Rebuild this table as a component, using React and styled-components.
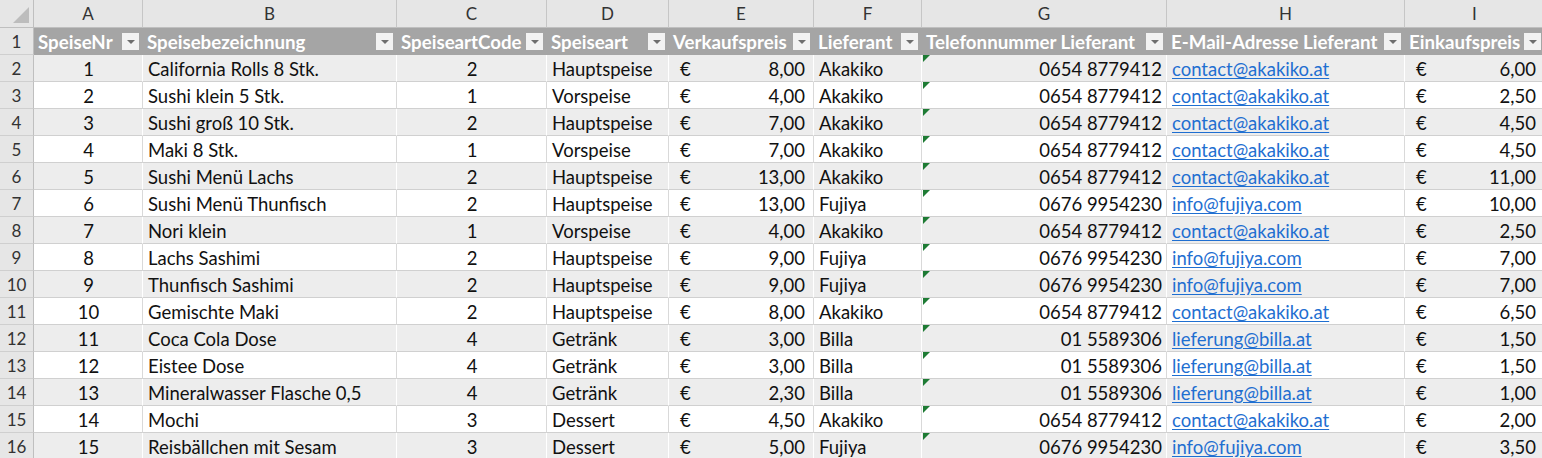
import React from "react";
import styled, { createGlobalStyle } from "styled-components";

const GlobalStyle = createGlobalStyle`
  body {
    margin: 0;
    background: #ffffff;
    font-family: Lato, "Open Sans", sans-serif;
    overflow: hidden;
  }
`;

const columns = [
  { key: "A", width: 109, title: "SpeiseNr" },
  { key: "B", width: 254, title: "Speisebezeichnung" },
  { key: "C", width: 150, title: "SpeiseartCode" },
  { key: "D", width: 122, title: "Speiseart" },
  { key: "E", width: 145, title: "Verkaufspreis" },
  { key: "F", width: 108, title: "Lieferant" },
  { key: "G", width: 245, title: "Telefonnummer Lieferant" },
  { key: "H", width: 238, title: "E-Mail-Adresse Lieferant" },
  { key: "I", width: 140, title: "Einkaufspreis" },
];

const suppliers = {
  Akakiko: { tel: "0654 8779412", mail: "contact@akakiko.at" },
  Fujiya: { tel: "0676 9954230", mail: "info@fujiya.com" },
  Billa: { tel: "01 5589306", mail: "lieferung@billa.at" },
};

const rows = [
  [1, "California Rolls 8 Stk.", 2, "Hauptspeise", "8,00", "Akakiko", "6,00"],
  [2, "Sushi klein 5 Stk.", 1, "Vorspeise", "4,00", "Akakiko", "2,50"],
  [3, "Sushi groß 10 Stk.", 2, "Hauptspeise", "7,00", "Akakiko", "4,50"],
  [4, "Maki 8 Stk.", 1, "Vorspeise", "7,00", "Akakiko", "4,50"],
  [5, "Sushi Menü Lachs", 2, "Hauptspeise", "13,00", "Akakiko", "11,00"],
  [6, "Sushi Menü Thunfisch", 2, "Hauptspeise", "13,00", "Fujiya", "10,00"],
  [7, "Nori klein", 1, "Vorspeise", "4,00", "Akakiko", "2,50"],
  [8, "Lachs Sashimi", 2, "Hauptspeise", "9,00", "Fujiya", "7,00"],
  [9, "Thunfisch Sashimi", 2, "Hauptspeise", "9,00", "Fujiya", "7,00"],
  [10, "Gemischte Maki", 2, "Hauptspeise", "8,00", "Akakiko", "6,50"],
  [11, "Coca Cola Dose", 4, "Getränk", "3,00", "Billa", "1,50"],
  [12, "Eistee Dose", 4, "Getränk", "3,00", "Billa", "1,50"],
  [13, "Mineralwasser Flasche 0,5", 4, "Getränk", "2,30", "Billa", "1,00"],
  [14, "Mochi", 3, "Dessert", "4,50", "Akakiko", "2,00"],
  [15, "Reisbällchen mit Sesam", 3, "Dessert", "5,00", "Fujiya", "3,50"],
];

const Sheet = styled.div`
  display: grid;
  grid-template-columns: 34px ${columns.map((c) => `${c.width}px`).join(" ")};
  grid-template-rows: 28px;
  grid-auto-rows: 27px;
  width: 1542px;
  height: 458px;
  overflow: hidden;
  font-size: 18.5px;
  color: #111;
`;

const Corner = styled.div`
  position: relative;
  background: #e6e6e6;
  border-right: 1px solid #bfbfbf;
  border-bottom: 1px solid #bfbfbf;
  &::after {
    content: "";
    position: absolute;
    right: 4px;
    bottom: 4px;
    border-left: 16px solid transparent;
    border-bottom: 16px solid #bdbdbd;
  }
`;

const ColLetter = styled.div`
  display: flex;
  align-items: center;
  justify-content: center;
  background: #e6e6e6;
  border-right: 1px solid #c6c6c6;
  border-bottom: 1px solid #bfbfbf;
  color: #333;
  font-size: 17px;
`;

const RowNum = styled.div`
  display: flex;
  align-items: center;
  justify-content: center;
  padding-top: 1px;
  background: #e6e6e6;
  border-right: 1px solid #bfbfbf;
  border-bottom: 1px solid #cfcfcf;
  color: #333;
  font-size: 17px;
`;

const HeadCell = styled.div`
  display: flex;
  align-items: center;
  justify-content: space-between;
  gap: 4px;
  padding: 1px 4px 0;
  background: #a5a5a5;
  color: #fff;
  font-weight: 700;
  font-size: 18.7px;
  white-space: nowrap;
  overflow: hidden;
  border-bottom: 1px solid #a5a5a5;
`;

const FilterBtn = styled.span`
  flex: none;
  width: 17px;
  height: 17px;
  background: #f2f2f2;
  display: flex;
  align-items: center;
  justify-content: center;
  &::before {
    content: "";
    border-left: 4px solid transparent;
    border-right: 4px solid transparent;
    border-top: 4px solid #6e6e6e;
  }
`;

const Cell = styled.div`
  position: relative;
  display: flex;
  align-items: center;
  justify-content: ${(p) =>
    p.$align === "center" ? "center" : p.$align === "right" ? "flex-end" : "flex-start"};
  padding: 2px 4px 0 5px;
  background: ${(p) => (p.$band ? "#ededed" : "#ffffff")};
  border-right: 1px solid ${(p) => (p.$band ? "#ffffff" : "#d9d9d9")};
  border-bottom: 1px solid #d0d0d0;
  white-space: nowrap;
  overflow: hidden;
`;

const Money = styled(Cell)`
  justify-content: space-between;
  padding: 2px 8px 0 11px;
`;

const TextFlag = styled.span`
  position: absolute;
  left: 1px;
  top: 0;
  border-top: 7px solid #1e7b34;
  border-right: 7px solid transparent;
`;

const Link = styled.a`
  color: #1f6fd1;
  text-decoration: underline;
  text-underline-offset: 2px;
`;

export default function App() {
  return (
    <>
      <GlobalStyle />
      <Sheet>
        <Corner />
        {columns.map((c) => (
          <ColLetter key={c.key}>{c.key}</ColLetter>
        ))}

        <RowNum>1</RowNum>
        {columns.map((c) => (
          <HeadCell key={c.key}>
            <span>{c.title}</span>
            <FilterBtn />
          </HeadCell>
        ))}

        {rows.map((r, i) => {
          const band = i % 2 === 0;
          const sup = suppliers[r[5]];
          return (
            <React.Fragment key={r[0]}>
              <RowNum>{i + 2}</RowNum>
              <Cell $band={band} $align="center">{r[0]}</Cell>
              <Cell $band={band}>{r[1]}</Cell>
              <Cell $band={band} $align="center">{r[2]}</Cell>
              <Cell $band={band}>{r[3]}</Cell>
              <Money $band={band}>
                <span>€</span>
                <span>{r[4]}</span>
              </Money>
              <Cell $band={band}>{r[5]}</Cell>
              <Cell $band={band} $align="right">
                <TextFlag />
                {sup.tel}
              </Cell>
              <Cell $band={band}>
                <Link href="#">{sup.mail}</Link>
              </Cell>
              <Money $band={band}>
                <span>€</span>
                <span>{r[6]}</span>
              </Money>
            </React.Fragment>
          );
        })}
      </Sheet>
    </>
  );
}
